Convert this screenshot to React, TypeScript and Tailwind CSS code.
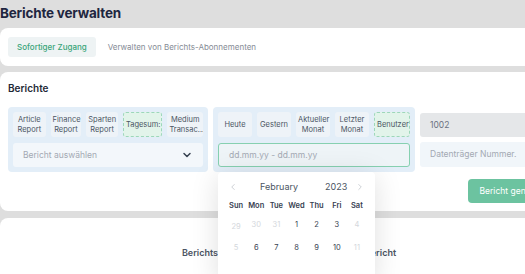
import { ChevronDown, ChevronLeft, ChevronRight } from 'lucide-react'

const reportButtons = [
  { label: 'Article Report', w: 'w-[33px]' },
  { label: 'Finance Report', w: 'w-[31px]' },
  { label: 'Sparten Report', w: 'w-[32px]' },
  { label: 'Tagesum:', w: 'w-[40px]', active: true },
  { label: 'Medium Transac...', w: 'w-[36px]' },
]

const rangeButtons = [
  { label: 'Heute' },
  { label: 'Gestern' },
  { label: 'Aktueller Monat' },
  { label: 'Letzter Monat' },
  { label: 'Benutzer', active: true },
]

const weekDays = ['Sun', 'Mon', 'Tue', 'Wed', 'Thu', 'Fri', 'Sat']
const days = [
  { d: '29', off: true },
  { d: '30', off: true },
  { d: '31', off: true },
  { d: '1' },
  { d: '2' },
  { d: '3' },
  { d: '4', off: true },
  { d: '5', off: true },
  { d: '6' },
  { d: '7' },
  { d: '8' },
  { d: '9' },
  { d: '10' },
  { d: '11', off: true },
]

function ChipButton({ label, w, active }: { label: string; w?: string; active?: boolean }) {
  return (
    <button
      className={`${w ?? 'flex-1'} h-[25px] rounded-[3px] px-[2px] text-[7.5px] leading-[10px] text-[#4b5563] text-center overflow-hidden ${
        active ? 'bg-[#e2f4ea] border border-dashed border-[#9dd7ba]' : 'bg-[#eef3f8]'
      }`}
    >
      {label}
    </button>
  )
}

export default function App() {
  return (
    <div className="w-[525px] h-[274px] overflow-hidden relative bg-[#dedede]" style={{ fontFamily: 'Inter, "Noto Sans", sans-serif' }}>
      <div className="w-[572px]">
        {/* Header */}
        <div className="h-[28px] flex items-center">
          <h1 className="text-[13.5px] font-bold text-[#1e2640] tracking-[-0.2px] -mt-[2px]">Berichte verwalten</h1>
        </div>

        {/* Tabs */}
        <div className="bg-white rounded-lg h-[38px] flex items-center px-2 gap-3">
          <span className="h-[20px] px-[9px] flex items-center bg-[#eef3f4] rounded-[3px] text-[8px] font-medium text-[#3aa57a]">
            Sofortiger Zugang
          </span>
          <span className="text-[8px] text-[#858b95]">Verwalten von Berichts-Abonnementen</span>
        </div>

        {/* Berichte card */}
        <div className="mt-[6px] bg-white rounded-lg h-[139px] px-2 pt-[10px]">
          <h2 className="text-[10px] font-semibold text-[#1f2937] h-[12px] leading-[12px]">Berichte</h2>
          <div className="mt-[13px] flex gap-[5px]">
            {/* Report type */}
            <div className="w-[200px] h-[65px] bg-[#e3eef8] rounded-[4px] p-[5px] flex flex-col gap-[6px]">
              <div className="flex gap-[5px]">
                {reportButtons.map((b) => (
                  <ChipButton key={b.label} {...b} />
                ))}
              </div>
              <div className="h-[27px] bg-[#f3f7fb] rounded-[3px] flex items-center justify-between px-[10px]">
                <span className="text-[8.5px] text-[#a3a9b3]">Bericht auswählen</span>
                <ChevronDown size={12} strokeWidth={3} className="text-[#374151]" />
              </div>
            </div>

            {/* Date range */}
            <div className="w-[202px] h-[65px] bg-[#e3eef8] rounded-[4px] p-[5px] flex flex-col gap-[6px]">
              <div className="flex gap-[5px]">
                {rangeButtons.map((b) => (
                  <ChipButton key={b.label} {...b} />
                ))}
              </div>
              <div className="h-[26px] bg-[#eef4f7] border border-[#86d0b0] rounded-[3px] flex items-center px-[10px]">
                <span className="text-[8.5px] text-[#a3a9b3]">dd.mm.yy - dd.mm.yy</span>
              </div>
            </div>

            {/* Datenträger */}
            <div className="w-[144px] pt-[6px] flex flex-col gap-[5px]">
              <div className="h-[24px] bg-[#e5e7e9] rounded-[3px] flex items-center px-[10px]">
                <span className="text-[8.5px] text-[#6b7280]">1002</span>
              </div>
              <div className="h-[25px] bg-[#f1f6fa] rounded-[3px] flex items-center px-[10px]">
                <span className="text-[8.5px] text-[#a3a9b3]">Datenträger Nummer.</span>
              </div>
            </div>
          </div>
          <div className="mt-[7px] flex justify-end">
            <button className="w-[96px] h-[24px] rounded-[4px] bg-[#6cc3a0] text-white text-[8.5px] text-right pr-[10px]">Bericht generieren</button>
          </div>
        </div>

        {/* Result card */}
        <div className="mt-[7px] bg-white rounded-lg h-[80px] pt-[28px] pl-[6px] text-center">
          <p className="text-[9px] font-semibold text-[#4b5563]">Berichtsvorschau - Bitte wählen Sie einen Bericht</p>
        </div>
      </div>

      {/* Datepicker popup */}
      <div className="absolute left-[218px] top-[172px] w-[157px] h-[110px] bg-white rounded-[4px] shadow-[0_4px_28px_rgba(0,0,0,0.13)] px-[8px] pt-[8px]">
        <div className="flex items-center h-[14px] text-[#4b5563]">
          <ChevronLeft size={10} className="text-[#c4c8ce] ml-[2px]" />
          <span className="ml-[22px] text-[9px]">February</span>
          <span className="ml-[27px] text-[9px]">2023</span>
          <ChevronRight size={10} className="text-[#c4c8ce] ml-auto mr-[2px]" />
        </div>
        <div className="grid grid-cols-7 mt-[4px]">
          {weekDays.map((w) => (
            <div key={w} className="h-[16px] flex items-center justify-center text-[7.5px] font-semibold text-[#374151]">
              {w}
            </div>
          ))}
          {days.map((x, i) => (
            <div
              key={i}
              className={`h-[21px] flex items-center justify-center text-[7.5px] ${x.off ? 'text-[#d4d7dc]' : 'text-[#374151]'} ${i === 0 ? 'mt-[2px]' : ''}`}
            >
              {x.d}
            </div>
          ))}
        </div>
      </div>
    </div>
  )
}
